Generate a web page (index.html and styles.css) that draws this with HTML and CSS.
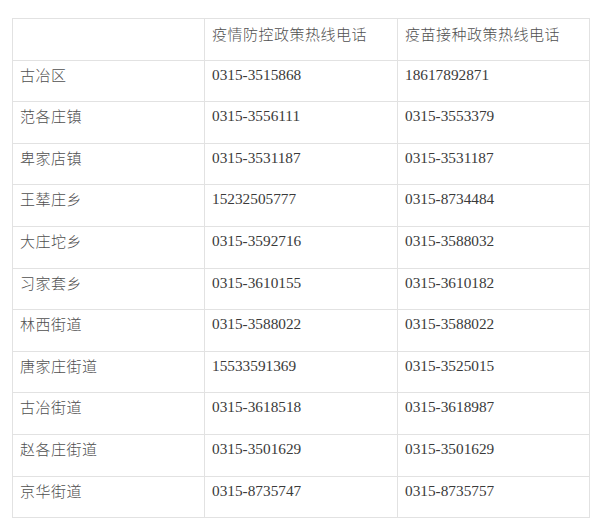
FILE: index.html
```html
<!DOCTYPE html>
<html lang="zh-CN">
<head>
<meta charset="utf-8">
<title>热线电话</title>
<link rel="stylesheet" href="styles.css">
</head>
<body>
<table class="hotline">
  <colgroup>
    <col class="c1"><col class="c2"><col class="c3">
  </colgroup>
  <thead>
    <tr class="head">
      <th></th>
      <th class="zh">疫情防控政策热线电话</th>
      <th class="zh">疫苗接种政策热线电话</th>
    </tr>
  </thead>
  <tbody>
    <tr><td class="zh">古冶区</td><td class="num">0315-3515868</td><td class="num">18617892871</td></tr>
    <tr><td class="zh">范各庄镇</td><td class="num">0315-3556111</td><td class="num">0315-3553379</td></tr>
    <tr><td class="zh">卑家店镇</td><td class="num">0315-3531187</td><td class="num">0315-3531187</td></tr>
    <tr><td class="zh">王辇庄乡</td><td class="num">15232505777</td><td class="num">0315-8734484</td></tr>
    <tr><td class="zh">大庄坨乡</td><td class="num">0315-3592716</td><td class="num">0315-3588032</td></tr>
    <tr><td class="zh">习家套乡</td><td class="num">0315-3610155</td><td class="num">0315-3610182</td></tr>
    <tr><td class="zh">林西街道</td><td class="num">0315-3588022</td><td class="num">0315-3588022</td></tr>
    <tr><td class="zh">唐家庄街道</td><td class="num">15533591369</td><td class="num">0315-3525015</td></tr>
    <tr><td class="zh">古冶街道</td><td class="num">0315-3618518</td><td class="num">0315-3618987</td></tr>
    <tr><td class="zh">赵各庄街道</td><td class="num">0315-3501629</td><td class="num">0315-3501629</td></tr>
    <tr><td class="zh">京华街道</td><td class="num">0315-8735747</td><td class="num">0315-8735757</td></tr>
  </tbody>
</table>
</body>
</html>
```
FILE: styles.css
```css
html, body {
  margin: 0;
  padding: 0;
  background: #ffffff;
}

body {
  padding: 18px 0 0 12px;
}

.hotline {
  border-collapse: collapse;
  table-layout: fixed;
  width: 577px;
  border: 1px solid #d6d6d6;
}

.c1 { width: 192px; }
.c2 { width: 193px; }
.c3 { width: 192px; }

.hotline th,
.hotline td {
  border: 1px solid #e2e2e2;
  height: 41.6px;
  box-sizing: border-box;
  padding: 5px 0 0 7px;
  vertical-align: top;
  text-align: left;
  font-weight: normal;
  line-height: 18px;
}

.hotline .head th {
  padding-top: 6px;
}

.zh {
  font-family: "Noto Sans CJK SC", "Noto Sans", sans-serif;
  font-size: 15px;
  letter-spacing: 0.5px;
  color: #4f4f4f;
}

.hotline .zh {
  font-weight: 300;
}

.num {
  font-family: "Liberation Serif", "DejaVu Serif", serif;
  font-size: 15.3px;
  color: #3a3a3a;
}
```
